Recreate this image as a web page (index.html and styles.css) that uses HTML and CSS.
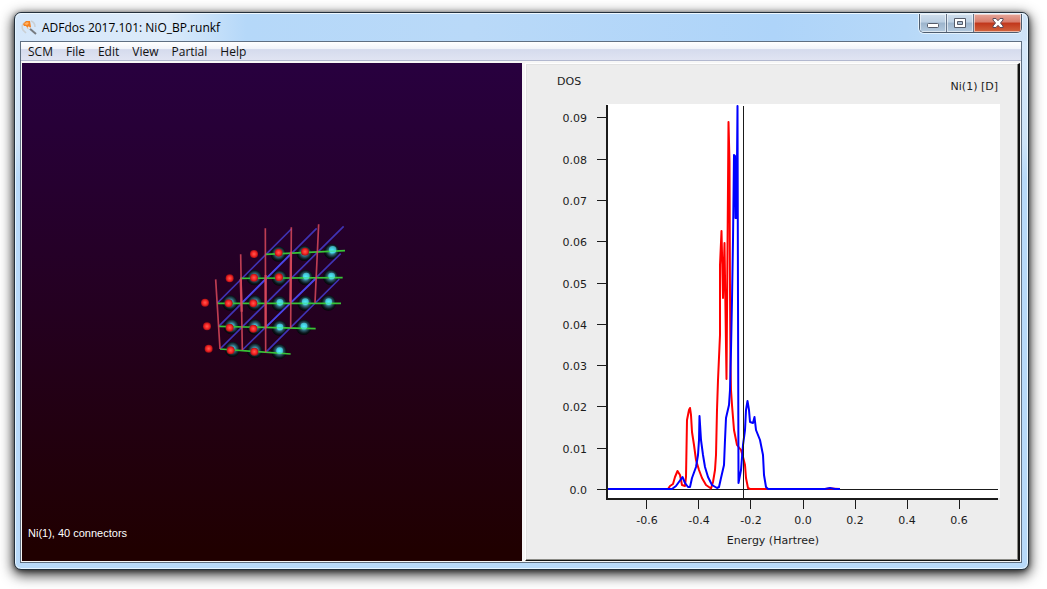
FILE: index.html
```
<!DOCTYPE html>
<html lang="en">
<head>
<meta charset="utf-8">
<title>ADFdos 2017.101: NiO_BP.runkf</title>
<link rel="stylesheet" href="styles.css">
</head>
<body>
<main class="window">
  <header class="titlebar">
    <svg class="app-icon" viewBox="0 0 16 16" aria-hidden="true">
      <path d="M5 2C2 3 0 6 2 10l3 3M10 1c3 1 4 3 4 6" fill="none" stroke="#cbd0d4" stroke-width="1.6"/>
      <path d="M2 4l3-3 4 0 1 6-3 2-2-3-2 0z" fill="#f58220"/>
      <path d="M3 4l3-2 2 1-2 2z" fill="#ffb366"/>
      <path d="M8 8l7 6" stroke="#777b80" stroke-width="2" fill="none"/>
      <path d="M7 7l2 2" stroke="#e8e8e8" stroke-width="2"/>
    </svg>
    <h1 class="title">ADFdos 2017.101: NiO_BP.runkf</h1>
    <div class="controls">
      <button class="control" aria-label="Minimize"><svg viewBox="0 0 14 12"><rect x="1.500" y="6.500" width="11" height="4" rx="1" fill="#fff" stroke="#555b69"/></svg></button>
      <button class="control" aria-label="Maximize"><svg viewBox="0 0 14 12"><path d="M1.500 1.500h11v9h-11z" fill="#fff" stroke="#555b69"/><path d="M4.500 4.500h5v3h-5z" fill="#a9bdd2" stroke="#555b69"/></svg></button>
      <button class="control close" aria-label="Close"><svg viewBox="0 0 14 12"><path d="M2 1.500h3l2 2.200 2-2.200h3v1.500l-2.500 3 2.500 3v1.500H9L7 8.300 5 10.500H2V9l2.500-3L2 3z" fill="#fff" stroke="#5b4a58"/></svg></button>
    </div>
  </header>
  <section class="client">
    <nav class="menubar">
      <button class="menu">SCM</button>
      <button class="menu">File</button>
      <button class="menu">Edit</button>
      <button class="menu">View</button>
      <button class="menu">Partial</button>
      <button class="menu">Help</button>
    </nav>
    <div class="panes">
      <section class="viewer">
        <svg class="scene" viewBox="22 63 500 498" role="img" aria-label="NiO crystal structure">
          <defs>
            <radialGradient id="nickel" cx=".52" cy=".46" r=".54">
              <stop offset="0" stop-color="#5cf4ff"/>
              <stop offset=".25" stop-color="#3fb4c8"/>
              <stop offset=".5" stop-color="#2b5868"/>
              <stop offset=".78" stop-color="#0c181e"/>
              <stop offset="1" stop-color="#020406"/>
            </radialGradient>
            <radialGradient id="oxygen">
              <stop offset="0" stop-color="#ff5c50"/>
              <stop offset=".6" stop-color="#f52424"/>
              <stop offset="1" stop-color="#a01015"/>
            </radialGradient>
            <circle id="ni" r="23" fill="url(#nickel)"/>
            <circle id="o" r="12" fill="url(#oxygen)"/>
          </defs>
          <g transform="translate(190 215) scale(.33333)">
            <use href="#ni" x="265" y="117"/><use href="#ni" x="343" y="115"/><use href="#ni" x="425" y="110"/>
            <use href="#ni" x="193" y="188"/><use href="#ni" x="268" y="189"/><use href="#ni" x="346" y="188"/><use href="#ni" x="422" y="187"/>
            <use href="#ni" x="120" y="264"/><use href="#ni" x="194" y="264"/><use href="#ni" x="268" y="266"/><use href="#ni" x="345" y="265"/><use href="#ni" x="415" y="264"/>
            <use href="#ni" x="124" y="335"/><use href="#ni" x="194" y="336"/><use href="#ni" x="268" y="339"/><use href="#ni" x="341" y="337"/>
            <use href="#ni" x="127" y="403"/><use href="#ni" x="194" y="407"/><use href="#ni" x="267" y="410"/>
            <g fill="none" stroke-width="5">
              <path class="axis-c" d="M82 264L304 42M86 334L380 40M90 402L461 34M157 405L452 116M227 412L448 192"/>
              <path class="axis-c bright" d="M157 262L304 115M228 336L378 190"/>
              <path class="axis-a" d="M227 118L465 107M150 190L458 188M82 265L453 265M86 334L377 341M90 402L302 417"/>
              <path class="axis-b" d="M77 193L90 402M152 118L157 405M226 40L227 412M304 37L302 340M386 28L375 263"/>
              <path class="axis-b" stroke-width="7" d="M152 192L155 290M227 180L227 340M303 110L301 260"/>
            </g>
            <g class="glints">
              <circle cx="428" cy="104" r="11"/><circle cx="349" cy="183" r="10"/><circle cx="425" cy="183" r="10"/>
              <circle cx="270" cy="262" r="10"/><circle cx="346" cy="260" r="10"/><circle cx="416" cy="260" r="10"/>
              <circle cx="270" cy="336" r="10"/><circle cx="342" cy="333" r="10"/><circle cx="269" cy="407" r="10"/>
            </g>
            <use href="#o" x="192" y="117"/><use href="#o" x="119" y="190"/><use href="#o" x="45" y="263"/><use href="#o" x="51" y="334"/><use href="#o" x="56" y="401"/>
            <use href="#o" x="266" y="113"/><use href="#o" x="345" y="110"/><use href="#o" x="192" y="188"/><use href="#o" x="267" y="187"/>
            <use href="#o" x="116" y="265"/><use href="#o" x="190" y="265"/><use href="#o" x="119" y="338"/><use href="#o" x="190" y="341"/>
            <use href="#o" x="122" y="406"/><use href="#o" x="193" y="410"/>
          </g>
        </svg>
        <p class="status">Ni(1), 40 connectors</p>
      </section>
      <section class="plot">
        <svg class="chart" viewBox="526 64 492 496" role="img" aria-label="Density of states against energy">
          <rect x="607" y="104" width="393" height="394" fill="#fff"/>
          <path class="rule" d="M608 489.500H998"/>
          <path class="curve red" d="M608 489H668L670 486L673 484L675 477L677.500 471L680 475L682 485L685 486L686 477L687 420L689 410L690 408L691 415L692 432L694 445L696 460L699 470L702 478L706 485L711 488.500L713 482L715 470L716 455L717 410L718 380L720 335L720 265L721.500 231L723 298L724.500 243L726.500 379L728.500 122L729.500 162L730 290L730.500 367L731 390L732 405L734 430L737 445L741 450L743 457L745 465L746 478L748 488L750 489H825L830 488.500L840 489"/>
          <path class="curve blue" d="M608 489H672L676 486L682.500 477L685 483L688 487L690 487L692 478L696 467L698 455L699 440L699.500 416L701 440L703 455L705 467L708 477L712 485L717 488L719 487L721 478L724 465L725 440L726 418L729 405L730 390L731 350L732 300L733 240L734 155L735 156L735.500 218L736.500 218L737.500 106L738 300L738.500 483L741 470L743 445L745 430L746 410L747.500 401L749 410L750 422L753 423L754.500 417L756 430L760 440L763 455L764 475L766 487L768 489H825L830 488L835 489H840"/>
          <path class="rule" d="M743.500 106V498"/>
          <path class="axis" d="M607 105V499H998"/>
          <path class="rule" d="M597 117.500h10M597 159.500h10M597 200.500h10M597 241.500h10M597 283.500h10M597 324.500h10M597 365.500h10M597 406.500h10M597 448.500h10M597 489.500h10M646.500 499v10M698.500 499v10M750.500 499v10M803.500 499v10M855.500 499v10M907.500 499v10M959.500 499v10"/>
          <g class="end">
            <text x="587" y="122">0.09</text><text x="587" y="164">0.08</text><text x="587" y="205">0.07</text>
            <text x="587" y="246">0.06</text><text x="587" y="288">0.05</text><text x="587" y="329">0.04</text>
            <text x="587" y="370">0.03</text><text x="587" y="411">0.02</text><text x="587" y="453">0.01</text>
            <text x="587" y="494">0.0</text><text x="998" y="90">Ni(1) [D]</text>
          </g>
          <text x="557" y="85">DOS</text>
          <g class="middle">
            <text x="647" y="524">-0.6</text><text x="699" y="524">-0.4</text><text x="751" y="524">-0.2</text>
            <text x="803" y="524">0.0</text><text x="855" y="524">0.2</text><text x="907" y="524">0.4</text><text x="959" y="524">0.6</text>
            <text x="773" y="544">Energy (Hartree)</text>
          </g>
        </svg>
      </section>
    </div>
  </section>
</main>
</body>
</html>
```
FILE: styles.css
```
* {
  box-sizing: border-box;
}

body {
  margin: 0;
  height: 100vh;
  padding: 12px 18px 19px 14px;
  display: flex;
  background: #fff;
  font-family: "Open Sans", "Noto Sans", sans-serif;
  font-size: 12px;
  color: #000;
  overflow: hidden;
}

.window {
  flex: 1;
  min-width: 0;
  display: flex;
  flex-direction: column;
  padding: 0 6px 6px 5px;
  border: 1px solid #24303c;
  border-radius: 7px;
  background: linear-gradient(180deg, rgba(225, 238, 251, .8), rgba(214, 231, 247, .7) 130px, rgba(184, 217, 249, 0) 165px), #b8d9f9;
  box-shadow: inset 0 0 0 1px #e6f5ff, 0 4px 13px 1px rgba(0, 0, 0, .8), 0 1px 5px rgba(0, 0, 0, .5);
}

.titlebar {
  height: 28px;
  display: flex;
  align-items: center;
  gap: 5px;
  margin: 0 -5px 0 -4px;
  padding: 0 5px 0 5px;
  border-radius: 6px 6px 0 0;
  border-top: 1px solid #eef8ff;
  background: linear-gradient(90deg, #d5e7fa, #dcebfa 150px, #b5d8f9 230px, #b9d9f8 45%, #aed4f9 75%, #b6d8f8 88%, #cfe3f7);
}

.app-icon {
  width: 16px;
  height: 16px;
}

.title {
  margin: 0;
  font-size: 12px;
  line-height: 16px;
  font-weight: 400;
}

.controls {
  margin-left: auto;
  align-self: flex-start;
  display: flex;
  height: 19px;
  border: 1px solid #4d5c6e;
  border-top: 0;
  border-radius: 0 0 5px 5px;
  overflow: hidden;
  box-shadow: 0 0 0 1px #e4f2fd;
}

.control {
  width: 27px;
  padding: 0;
  border: 0;
  border-right: 1px solid #66758a;
  display: flex;
  align-items: center;
  justify-content: center;
  background: linear-gradient(#cfdeed 0, #bccfe2 45%, #9cb4cc 50%, #b4cadf);
  box-shadow: inset 0 0 0 1px rgba(255, 255, 255, .55);
}

.control svg {
  width: 14px;
  height: 12px;
}

.close {
  width: 47px;
  border-right: 0;
  background: linear-gradient(#e6a79b 0, #d87c6b 45%, #c1361b 50%, #d2653f);
}

.client {
  flex: 1;
  min-height: 0;
  display: flex;
  flex-direction: column;
  border: 1px solid #5f6f82;
  background: #f6f6f6;
}

.menubar {
  height: 19px;
  display: flex;
  align-items: flex-end;
  gap: 13px;
  padding: 0 7px;
  border-bottom: 1px solid #b2b8cf;
  background: linear-gradient(#fff 0, #f1f4fa 38%, #d5dbed 42%, #e0e4f2);
}

.menu {
  padding: 0;
  border: 0;
  background: none;
  font: inherit;
  line-height: 16px;
  color: #111;
}

.panes {
  flex: 1;
  min-height: 0;
  display: grid;
  grid-template-columns: 500fr 495fr;
  gap: 3px;
  padding: 2px 1px 1px;
}

.viewer {
  min-width: 0;
  min-height: 0;
  display: grid;
  background: linear-gradient(#28003f, #240020 50%, #200000 98%);
}

.scene,
.status {
  grid-area: 1 / 1;
}

.scene {
  width: 100%;
  height: 100%;
  min-height: 0;
}

.status {
  align-self: end;
  margin: 0;
  padding: 0 6px 20px;
  font: 11px/16px "Liberation Sans", Arial, sans-serif;
  color: #fff;
}

.axis-a { stroke: #38c436; }
.axis-b { stroke: #d8485a; stroke-opacity: .85; }
.axis-c { stroke: #4033b4; }
.axis-c.bright { stroke: #4a45e8; }
.glints { fill: #4ff0ff; fill-opacity: .6; }

.plot {
  min-width: 0;
  min-height: 0;
  display: flex;
  border: 1px solid #fff;
  border-right: 2px solid #111;
  border-bottom: 1px solid #111;
  background: #ededed;
  box-shadow: inset -1px -1px 0 #8b8b86, inset 1px 1px 0 #e3e3e3;
}

.chart {
  flex: 1;
  min-width: 0;
  width: 100%;
  height: 100%;
  font: 11px "DejaVu Sans", Verdana, sans-serif;
  fill: #1c1c1c;
}

.rule,
.axis,
.curve {
  fill: none;
  stroke: #1b1b1b;
  stroke-width: 1;
}

.axis,
.curve {
  stroke-width: 2;
}

.curve { stroke-linejoin: round; }
.red { stroke: #f00; }
.blue { stroke: #00f; }
.end { text-anchor: end; }
.middle { text-anchor: middle; }
```
